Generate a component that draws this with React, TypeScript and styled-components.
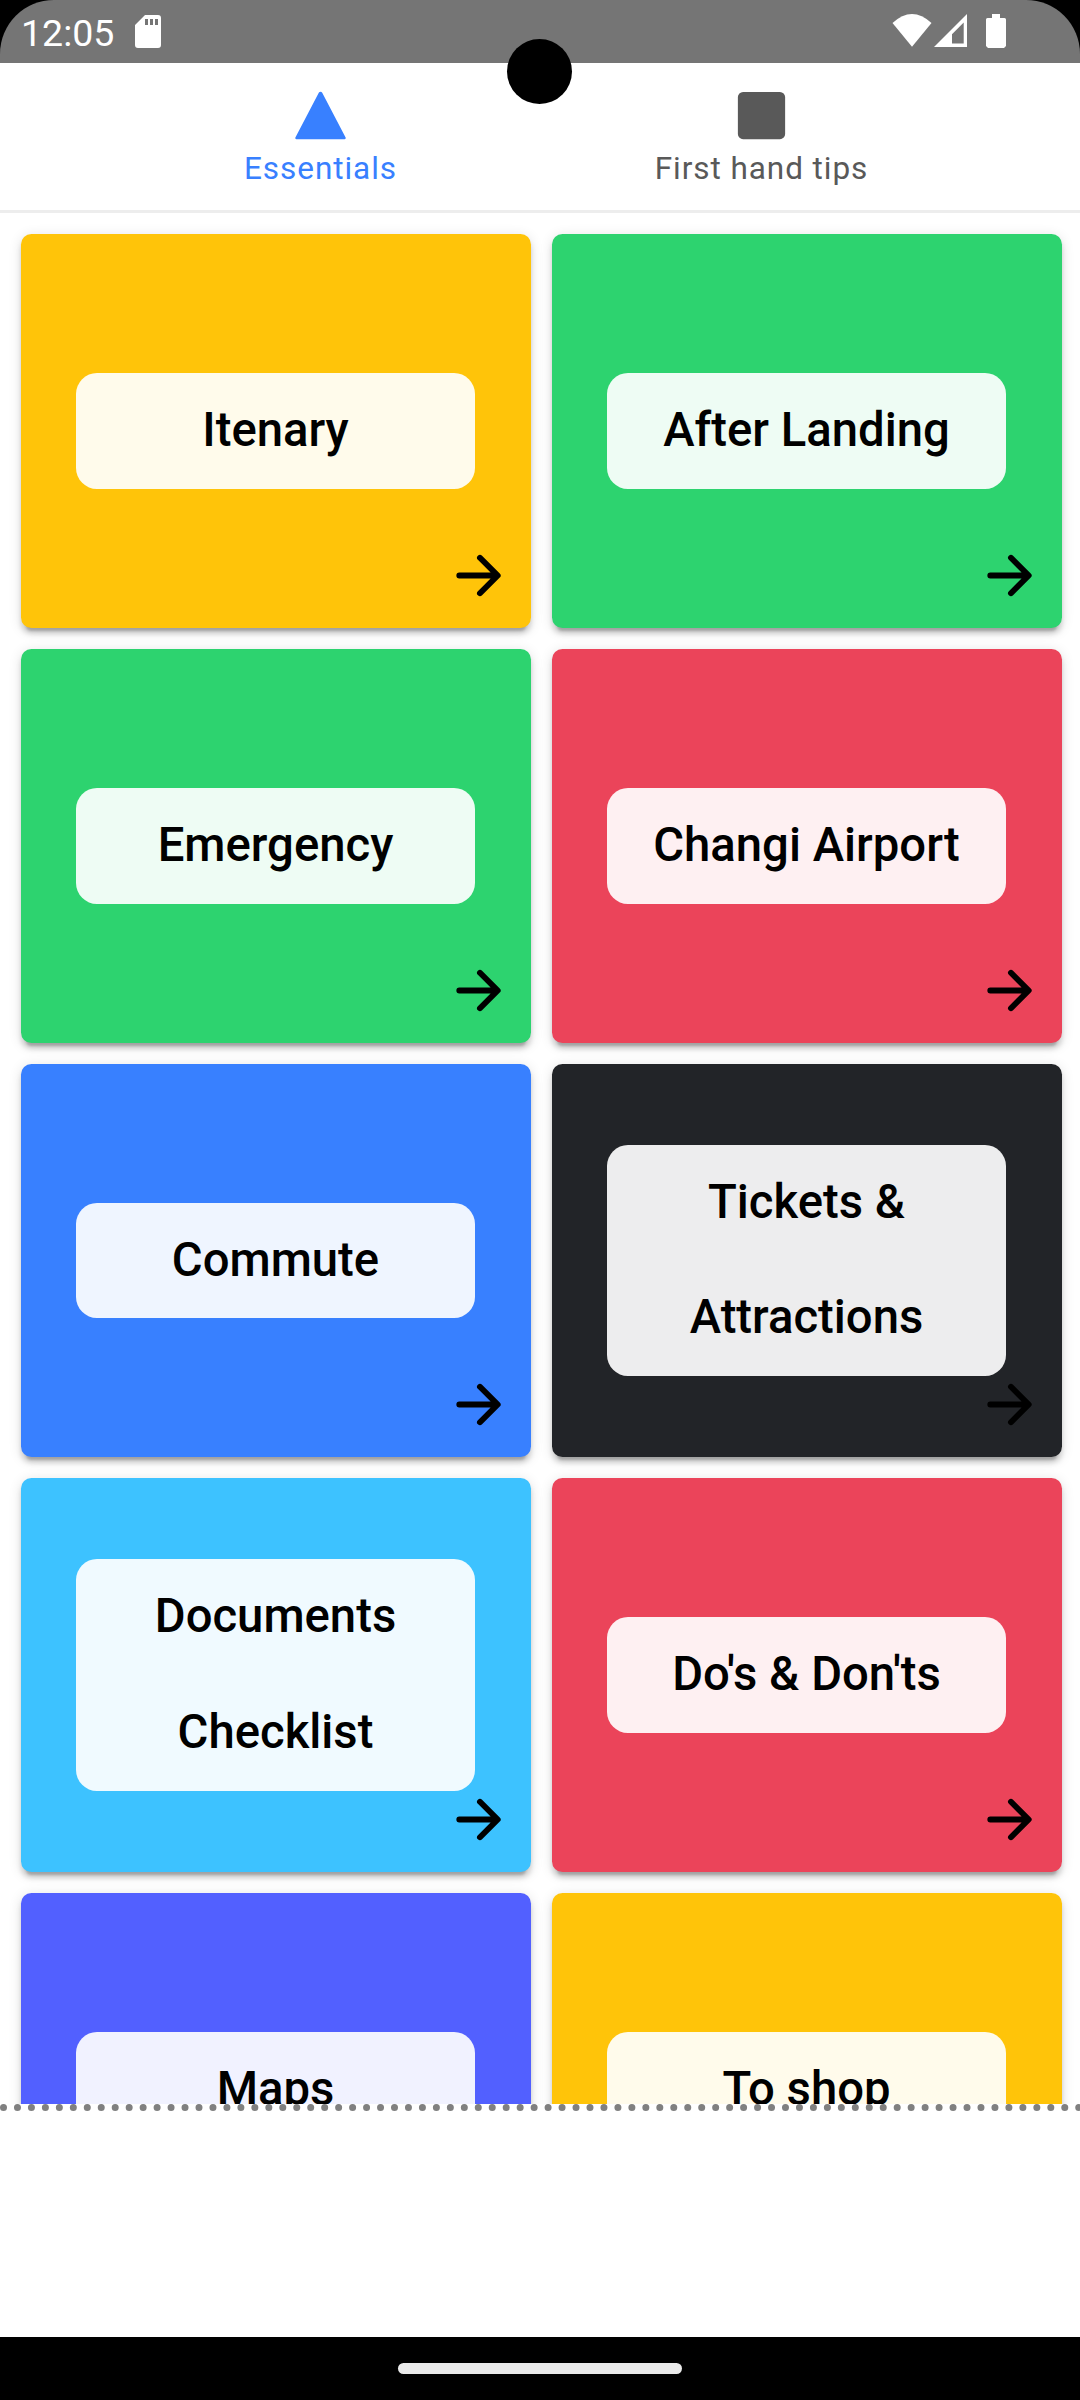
import React from 'react';
import styled, { createGlobalStyle } from 'styled-components';

const GlobalStyle = createGlobalStyle`
  *, *::before, *::after { box-sizing: border-box; }
  html, body { margin: 0; padding: 0; background: #000; }
  body { font-family: Roboto, "Noto Sans", sans-serif; }
`;

const Device = styled.div`
  position: relative;
  display: flex;
  flex-direction: column;
  width: 1080px;
  height: 2400px;
  overflow: hidden;
  background: #000;
`;

const StatusBar = styled.header`
  display: flex;
  align-items: flex-start;
  justify-content: space-between;
  flex: none;
  height: 63px;
  padding: 0 74px 0 21px;
  border-radius: 54px 54px 0 0;
  background: #757575;
  color: #fff;
`;

const StatusGroup = styled.div`
  display: flex;
  align-items: flex-start;
`;

const Clock = styled.span`
  width: 114px;
  padding-top: 11px;
  font-size: 37.5px;
  line-height: 44px;
`;

const StatusIcon = styled.svg<{ $gap?: number; $top: number }>`
  display: block;
  flex: none;
  margin-left: ${({ $gap = 0 }) => $gap}px;
  margin-top: ${({ $top }) => $top}px;
  fill: #fff;
`;

const Camera = styled.div`
  position: absolute;
  top: 39px;
  left: 507px;
  width: 65px;
  height: 65px;
  border-radius: 50%;
  background: #000;
`;

const Viewport = styled.main`
  display: flex;
  flex-direction: column;
  flex: 1;
  min-height: 0;
  width: 1083px;
  background: #fff;
`;

const TabBar = styled.nav`
  display: flex;
  justify-content: center;
  flex: none;
  height: 150px;
  border-bottom: 3px solid #ededed;
`;

const Tab = styled.button<{ $active?: boolean }>`
  display: flex;
  flex-direction: column;
  align-items: center;
  width: 441px;
  padding: 21px 1px 0 0;
  border: 0;
  background: none;
  color: ${({ $active }) => ($active ? '#3880ff' : '#595959')};
  font-family: inherit;
`;

const TabIcon = styled.svg`
  display: block;
  width: 63px;
  height: 63px;
  fill: currentColor;
`;

const TabLabel = styled.span`
  font-size: 31.5px;
  line-height: 38px;
  margin-top: 3px;
  letter-spacing: 0.94px;
`;

const Scroller = styled.section`
  flex: none;
  height: 1891px;
  padding: 21.25px 21px 0;
  overflow: hidden;
`;

const Grid = styled.div`
  display: grid;
  grid-template-columns: 510px 510px;
  grid-auto-rows: 393.75px;
  row-gap: 20.98px;
  column-gap: 21px;
`;

const Card = styled.article<{ $color: string }>`
  position: relative;
  display: flex;
  align-items: center;
  justify-content: center;
  border-radius: 10.5px;
  background: ${({ $color }) => $color};
  box-shadow:
    0 7.9px 2.6px -5.25px rgba(0, 0, 0, 0.2),
    0 5.25px 5.25px 0 rgba(0, 0, 0, 0.14),
    0 2.6px 13px 0 rgba(0, 0, 0, 0.12);
`;

const CardLabel = styled.h2`
  width: 399px;
  margin: 0 1px 0.2px 0;
  padding: 0 42px;
  border-radius: 21px;
  background: rgba(255, 255, 255, 0.92);
  color: #000;
  font-size: 47.25px;
  font-weight: 500;
  line-height: 115.8px;
  text-align: center;
  white-space: pre-line;
`;

const CardArrow = styled.svg`
  position: absolute;
  right: 21px;
  bottom: 21px;
  width: 63px;
  height: 63px;
  fill: none;
  stroke: #000;
  stroke-width: 48;
  stroke-linecap: round;
  stroke-linejoin: round;
`;

const Footer = styled.footer`
  flex: 1;
  border-top: 7px dotted #808080;
`;

const NavBar = styled.div`
  display: flex;
  justify-content: center;
  flex: none;
  height: 63px;
  padding-top: 26px;
  background: #000;
`;

const NavHandle = styled.div`
  width: 284px;
  height: 11px;
  border-radius: 6px;
  background: #eaeaea;
`;

const cards = [
  { label: 'Itenary', color: '#ffc409' },
  { label: 'After Landing', color: '#2dd36f' },
  { label: 'Emergency', color: '#2dd36f' },
  { label: 'Changi Airport', color: '#eb445a' },
  { label: 'Commute', color: '#3880ff' },
  { label: 'Tickets &\nAttractions', color: '#222428' },
  { label: 'Documents\nChecklist', color: '#3dc2ff' },
  { label: "Do's & Don'ts", color: '#eb445a' },
  { label: 'Maps', color: '#5260ff' },
  { label: 'To shop', color: '#ffc409' },
];

export default function App() {
  return (
    <Device>
      <GlobalStyle />
      <StatusBar>
        <StatusGroup>
          <Clock>12:05</Clock>
          <StatusIcon $top={15} width="26" height="33" viewBox="0 0 26 33">
            <path
              fillRule="evenodd"
              d="M10 0H23Q26 0 26 3V30Q26 33 23 33H3Q0 33 0 30V10ZM10 4V10H13V4ZM15 4V10H18V4ZM20 4V10H23V4Z"
            />
          </StatusIcon>
        </StatusGroup>
        <StatusGroup>
          <StatusIcon $top={14} width="40" height="33" viewBox="0 0 40 33">
            <path d="M0.5 9Q20 -9 39.5 9L20 32.7Z" />
          </StatusIcon>
          <StatusIcon $top={14} $gap={2} width="33" height="33" viewBox="0 0 33 33">
            <path fillRule="evenodd" d="M33 0V33H0ZM29.7 8.5L18 20.2V29.5H29.7Z" />
          </StatusIcon>
          <StatusIcon $top={14} $gap={19} width="20" height="34" viewBox="0 0 20 34">
            <path d="M6 0H14V4H18.5Q20 4 20 5.5V32L18 34H2L0 32V5.5Q0 4 1.5 4H6Z" />
          </StatusIcon>
        </StatusGroup>
      </StatusBar>
      <Viewport>
        <TabBar>
          <Tab $active>
            <TabIcon viewBox="0 0 512 512">
              <path d="M60 449a10 10 0 0 1-8-15L242 72a16 16 0 0 1 28 0L460 434a10 10 0 0 1-8 15z" />
            </TabIcon>
            <TabLabel>Essentials</TabLabel>
          </Tab>
          <Tab>
            <TabIcon viewBox="0 0 512 512">
              <rect x="64" y="64" width="384" height="384" rx="42" />
            </TabIcon>
            <TabLabel>First hand tips</TabLabel>
          </Tab>
        </TabBar>
        <Scroller>
          <Grid>
            {cards.map((card) => (
              <Card key={card.label} $color={card.color}>
                <CardLabel>{card.label}</CardLabel>
                <CardArrow viewBox="0 0 512 512">
                  <path d="M268 112l144 144-144 144M392 256H100" />
                </CardArrow>
              </Card>
            ))}
          </Grid>
        </Scroller>
        <Footer />
      </Viewport>
      <NavBar>
        <NavHandle />
      </NavBar>
      <Camera />
    </Device>
  );
}
